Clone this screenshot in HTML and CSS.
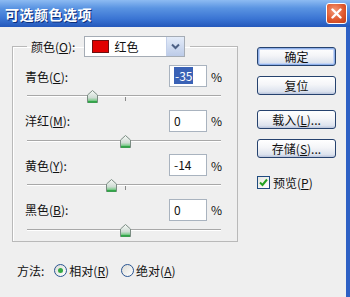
FILE: index.html
```html
<!DOCTYPE html>
<html lang="zh-CN">
<head>
  <meta charset="UTF-8">
  <title>可选颜色选项</title>
  <link rel="stylesheet" href="styles.css">
</head>
<body>

<svg width="0" height="0" class="defs">
  <defs>
    <linearGradient id="thumbFill" x1="0" y1="0" x2="0" y2="1">
      <stop offset="0" stop-color="#f7faf7"/>
      <stop offset="0.6" stop-color="#cfdcd4"/>
      <stop offset="0.8" stop-color="#8ccf98"/>
      <stop offset="1" stop-color="#2f9f48"/>
    </linearGradient>
    <symbol id="thumb" viewBox="0 0 11 13">
      <path d="M5.5 0.5 L10.5 5 L10.5 12.5 L0.5 12.5 L0.5 5 Z" fill="url(#thumbFill)" stroke="#7b8c83"/>
      <path d="M1 12 L10 12" stroke="#27a33f" stroke-width="1.5"/>
    </symbol>
  </defs>
</svg>

<div class="window">
  <div class="titlebar">
    <span class="title">可选颜色选项</span>
    <span class="close-btn">
      <svg width="11" height="11" viewBox="0 0 11 11"><path d="M1.5 1.5 L9.5 9.5 M9.5 1.5 L1.5 9.5" stroke="#fff" stroke-width="2.4" stroke-linecap="round"/></svg>
    </span>
  </div>

  <div class="client">
    <div class="main">
      <div class="left">
        <fieldset class="group">
          <legend class="group-head">
            <span class="head-label">颜色(<u>O</u>):</span>
            <span class="dropdown">
              <span class="swatch"></span>
              <span class="dd-text">红色</span>
              <span class="dd-btn">
                <svg width="9" height="7" viewBox="0 0 9 7"><path d="M1 1.5 L4.5 5 L8 1.5" fill="none" stroke="#4d6185" stroke-width="2"/></svg>
              </span>
            </span>
          </legend>

          <!-- 青色 -->
          <div class="row">
            <span class="row-label">青色(<u>C</u>):</span>
            <span class="num-box"><span class="sel">-35</span></span>
            <span class="pct">%</span>
          </div>
          <div class="slider">
            <div class="track"></div>
            <span class="tick"></span>
            <svg class="thumb" style="left: 60px"><use href="#thumb"/></svg>
          </div>

          <!-- 洋红 -->
          <div class="row">
            <span class="row-label">洋红(<u>M</u>):</span>
            <span class="num-box">0</span>
            <span class="pct">%</span>
          </div>
          <div class="slider">
            <div class="track"></div>
            <svg class="thumb" style="left: 93px"><use href="#thumb"/></svg>
          </div>

          <!-- 黄色 -->
          <div class="row">
            <span class="row-label">黄色(<u>Y</u>):</span>
            <span class="num-box">-14</span>
            <span class="pct">%</span>
          </div>
          <div class="slider">
            <div class="track"></div>
            <span class="tick"></span>
            <svg class="thumb" style="left: 79px"><use href="#thumb"/></svg>
          </div>

          <!-- 黑色 -->
          <div class="row">
            <span class="row-label">黑色(<u>B</u>):</span>
            <span class="num-box">0</span>
            <span class="pct">%</span>
          </div>
          <div class="slider">
            <div class="track"></div>
            <svg class="thumb" style="left: 93px"><use href="#thumb"/></svg>
          </div>
        </fieldset>
      </div>

      <div class="right">
        <button class="xp-btn default">确定</button>
        <button class="xp-btn">复位</button>
        <button class="xp-btn gap">载入(<u>L</u>)...</button>
        <button class="xp-btn">存储(<u>S</u>)...</button>
        <label class="check-row">
          <span class="checkbox">
            <svg width="9" height="9" viewBox="0 0 9 9"><path d="M1 4.5 L3.5 7 L8 1.5" fill="none" stroke="#21a121" stroke-width="2"/></svg>
          </span>
          <span>预览(<u>P</u>)</span>
        </label>
      </div>
    </div>

    <div class="method">
      <span class="method-label">方法:</span>
      <span class="radio checked"><span class="dot"></span></span>
      <span class="radio-text">相对(<u>R</u>)</span>
      <span class="radio"></span>
      <span class="radio-text">绝对(<u>A</u>)</span>
    </div>
  </div>
</div>

</body>
</html>
```

FILE: styles.css
```css
body {
  margin: 0;
  font-family: "Noto Sans CJK SC", "Liberation Sans", sans-serif;
  font-size: 12px;
  color: #111;
  background-color: #eeeeee;
}
.defs { position: absolute; }

.window {
  width: 350px;
  height: 297px;
  display: flex;
  flex-direction: column;
  background-color: #efefef;
}

/* title bar */
.titlebar {
  height: 27px;
  flex: none;
  display: flex;
  align-items: center;
  justify-content: space-between;
  padding: 0 3px 0 5px;
  background: linear-gradient(to bottom, #8dbbf2 0%, #5a94e2 30%, #3a74d3 70%, #2458bb 100%);
}
.title {
  color: #fff;
  font-weight: bold;
  font-size: 14px;
  letter-spacing: 0.5px;
  text-shadow: 1px 1px 0 #0c2f7a;
}
.close-btn {
  width: 19px;
  height: 19px;
  display: flex;
  align-items: center;
  justify-content: center;
  border: 1px solid #fff;
  border-radius: 3px;
  background: radial-gradient(circle at 40% 35%, #f39a7a 0%, #e0592e 55%, #c03d18 100%);
}

.client {
  flex: 1;
  display: flex;
  flex-direction: column;
  border-right: 4px solid #2e60c4;
}

.main { display: flex; }

.left { padding: 9px 0 0 12px; }

/* group box */
.group {
  box-sizing: border-box;
  width: 226px;
  height: 206px;
  margin: 0;
  padding: 8px 15px 0 12px;
  border: 1px solid #b9b9b9;
  box-shadow: inset 1px 1px 0 #fff;
}
.group-head {
  display: flex;
  align-items: center;
  margin-left: 2px;
  padding: 0 5px 0 4px;
}
.head-label { margin-right: 9px; }

.dropdown {
  width: 99px;
  height: 19px;
  display: flex;
  align-items: center;
  background: #fff;
  border: 1px solid #a5acb5;
}
.swatch {
  width: 15px;
  height: 11px;
  margin-left: 7px;
  background: #e00000;
  border: 1px solid #6a1010;
}
.dd-text { margin-left: 5px; flex: 1; }
.dd-btn {
  width: 17px;
  height: 19px;
  display: flex;
  align-items: center;
  justify-content: center;
  background: linear-gradient(to bottom, #e4ecf9, #bccbe8);
  border-left: 1px solid #c3d0ea;
}

.row {
  height: 22px;
  display: flex;
  align-items: center;
}
.row-label { flex: 1; }
.num-box {
  width: 32px;
  height: 20px;
  line-height: 20px;
  padding-left: 4px;
  background: #fff;
  border: 1px solid #a9b3bf;
}
.sel {
  background: #3a62b6;
  color: #fff;
  padding: 0 1px;
}
.pct { width: 15px; text-align: right; }

/* trackbar */
.slider {
  position: relative;
  height: 22.5px;
  margin-left: 2px;
  margin-right: 1px;
}
.track {
  position: absolute;
  left: 0;
  right: 0;
  top: 8px;
  border-top: 1px solid #a8a8a8;
  border-bottom: 1px solid #fff;
}
.tick {
  position: absolute;
  left: 98px;
  top: 10px;
  width: 1px;
  height: 4px;
  background: #8a8a8a;
}
.thumb {
  position: absolute;
  top: 3px;
  width: 11px;
  height: 13px;
}

/* right buttons */
.right {
  display: flex;
  flex-direction: column;
  padding: 20px 0 0 19px;
}
.xp-btn {
  width: 79px;
  height: 19px;
  margin-bottom: 10px;
  padding: 0;
  font-family: inherit;
  font-size: 12px;
  color: #111;
  border: 1px solid #26426e;
  border-radius: 3px;
  background: linear-gradient(to bottom, #ffffff 0%, #f4f5f8 45%, #dde3ee 85%, #b9c4dc 100%);
}
.xp-btn.default { box-shadow: inset 0 0 0 1px #8fb0ea, inset 0 0 0 2px #c3d4f5; }
.xp-btn.gap { margin-top: 5px; }

.check-row {
  display: flex;
  align-items: center;
  margin-top: 6px;
}
.checkbox {
  width: 11px;
  height: 11px;
  display: flex;
  align-items: center;
  justify-content: center;
  margin-right: 3px;
  background: linear-gradient(135deg, #e6e6df, #fff);
  border: 1px solid #1f4b80;
}

/* method row */
.method {
  display: flex;
  align-items: center;
  padding: 20px 0 0 17px;
}
.method-label { margin-right: 10px; }
.radio {
  width: 11px;
  height: 11px;
  display: flex;
  align-items: center;
  justify-content: center;
  border: 1px solid #2a5592;
  border-radius: 50%;
  background: linear-gradient(135deg, #dcdcd6, #fff);
}
.dot {
  width: 5px;
  height: 5px;
  border-radius: 50%;
  background: #35a845;
}
.radio-text { margin: 0 12px 0 2px; }
```
